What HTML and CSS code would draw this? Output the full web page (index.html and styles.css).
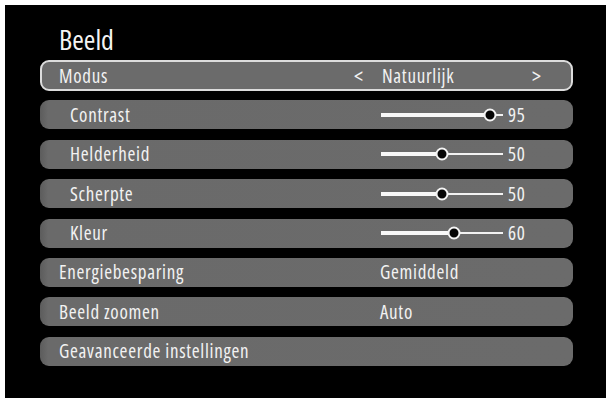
FILE: index.html
```html
<!DOCTYPE html>
<html>
<head>
<meta charset="utf-8">
<link rel="stylesheet" href="styles.css">
</head>
<body>
<div class="screen">
  <div class="title">Beeld</div>
  <div class="menu">
    <div class="row selected">
      <span class="label">Modus</span>
      <span class="value mode"><span class="arrow">&lt;</span><span class="mode-text">Natuurlijk</span><span class="arrow">&gt;</span></span>
    </div>
    <div class="row sub">
      <span class="label">Contrast</span>
      <span class="value"><span class="slider"><span class="fill" style="width: 89%"></span><span class="knob" style="left: 89%"></span></span><span class="num">95</span></span>
    </div>
    <div class="row sub">
      <span class="label">Helderheid</span>
      <span class="value"><span class="slider"><span class="fill" style="width: 50%"></span><span class="knob" style="left: 50%"></span></span><span class="num">50</span></span>
    </div>
    <div class="row sub">
      <span class="label">Scherpte</span>
      <span class="value"><span class="slider"><span class="fill" style="width: 50%"></span><span class="knob" style="left: 50%"></span></span><span class="num">50</span></span>
    </div>
    <div class="row sub">
      <span class="label">Kleur</span>
      <span class="value"><span class="slider"><span class="fill" style="width: 60%"></span><span class="knob" style="left: 60%"></span></span><span class="num">60</span></span>
    </div>
    <div class="row">
      <span class="label">Energiebesparing</span>
      <span class="value text">Gemiddeld</span>
    </div>
    <div class="row">
      <span class="label">Beeld zoomen</span>
      <span class="value text">Auto</span>
    </div>
    <div class="row">
      <span class="label">Geavanceerde instellingen</span>
    </div>
  </div>
</div>
</body>
</html>
```
FILE: styles.css
```css
html, body {
  margin: 0;
  padding: 0;
  background: #ffffff;
}
body {
  font-family: "Open Sans", "DejaVu Sans Condensed", sans-serif;
  font-stretch: 75%;
  color: #f2f2f2;
}
.screen {
  margin: 5px 0 0 5px;
  width: 601px;
  height: 393px;
  background: #000000;
  box-sizing: border-box;
  padding: 18px 0 0 35px;
}
.title {
  font-size: 28px;
  line-height: 32px;
  height: 37px;
  padding-left: 19px;
  color: #f4f4f4;
}
.menu {
  width: 533px;
  display: flex;
  flex-direction: column;
  gap: 10.4px;
}
.row {
  height: 29px;
  border-radius: 9px;
  background: linear-gradient(to right, #5c5c5c 0px, #6a6a6a 8px, #6b6b6b 100%);
  display: flex;
  align-items: center;
  box-sizing: border-box;
  font-size: 19px;
  letter-spacing: 0.7px;
}
.row .label {
  width: 312px;
  padding-left: 19px;
  box-sizing: border-box;
  white-space: nowrap;
}
.row.sub .label {
  padding-left: 30px;
}
.row.selected {
  height: 31px;
  border: 2px solid #dcdcdc;
  background: #6b6b6b;
  margin-bottom: -1px;
}
.row.selected .label {
  padding-left: 17px;
}
.value {
  display: flex;
  align-items: center;
}
.value.text {
  padding-left: 28px;
}
.mode .arrow {
  width: 28px;
  font-size: 21px;
}
.mode .mode-text {
  width: 150px;
}
.value .slider {
  position: relative;
  margin-left: 29px;
  width: 122px;
  height: 2px;
  background: #f2f2f2;
}
.slider .fill {
  position: absolute;
  left: 0;
  top: -1px;
  height: 4px;
  background: #f8f8f8;
}
.slider .knob {
  position: absolute;
  top: 1px;
  width: 9px;
  height: 9px;
  border: 2.5px solid #f4f4f4;
  border-radius: 50%;
  background: #050505;
  transform: translate(-50%, -50%);
}
.num {
  margin-left: 5px;
}
```
